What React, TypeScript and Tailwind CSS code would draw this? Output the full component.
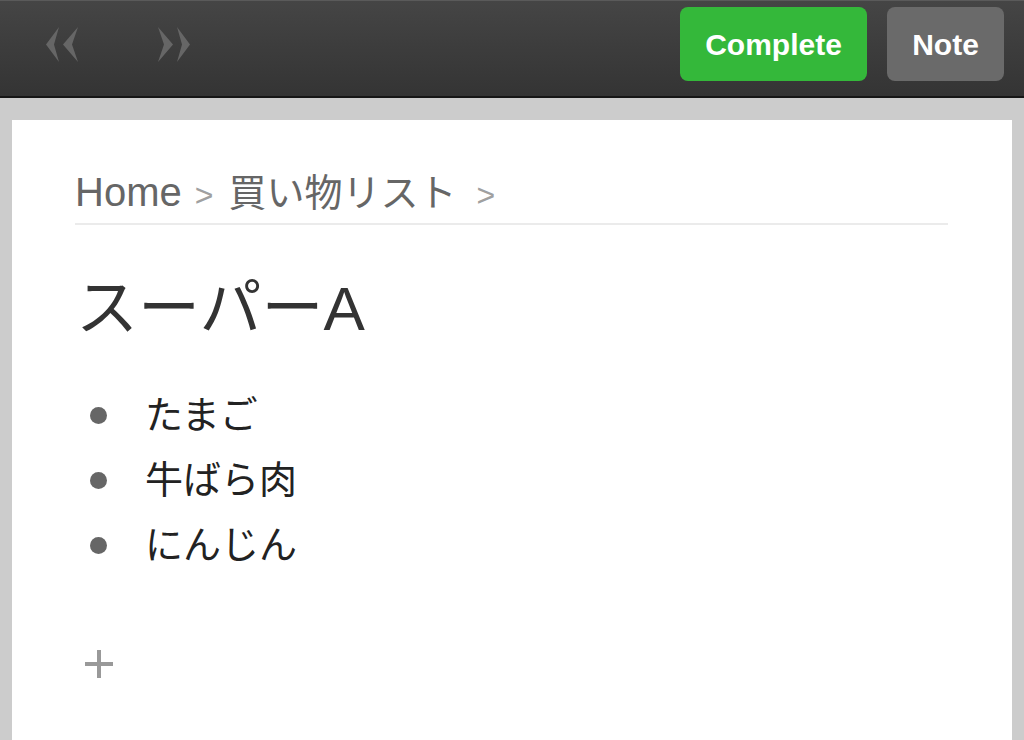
const items = ["たまご", "牛ばら肉", "にんじん"];

const font = { fontFamily: "'Liberation Sans', 'Noto Sans CJK JP', sans-serif" };

function Chevrons({ dir }: { dir: "left" | "right" }) {
  const d =
    dir === "left"
      ? "M13 0 L0 17.5 L13 35 L8 17.5 Z M32 0 L17 17.5 L32 35 L26 17.5 Z"
      : "M1 0 L16 17.5 L1 35 L7 17.5 Z M20 0 L33 17.5 L20 35 L25 17.5 Z";
  return (
    <svg width="34" height="35" viewBox="0 0 34 35">
      <path d={d} fill="#666" />
    </svg>
  );
}

export default function App() {
  return (
    <div className="w-[1024px] h-[740px] overflow-hidden bg-[#cccccc] flex flex-col" style={font}>
      {/* Top toolbar */}
      <div className="h-[98px] shrink-0 bg-gradient-to-b from-[#454545] to-[#343434] border-t border-[#5a5a5a] border-b-2 border-b-[#161616] flex items-start">
        <div className="flex items-center gap-[77px] pl-[46px] pt-[26px]">
          <Chevrons dir="left" />
          <Chevrons dir="right" />
        </div>
        <div className="ml-auto flex items-start gap-[20px] pr-[20px] pt-[6px]">
          <button className="w-[187px] h-[74px] rounded-[8px] bg-[#34b83a] text-white text-[30px] font-bold">
            Complete
          </button>
          <button className="w-[117px] h-[74px] rounded-[8px] bg-[#6a6a6a] text-white text-[30px] font-bold">
            Note
          </button>
        </div>
      </div>

      {/* Page */}
      <div className="flex-1 mt-[22px] mx-[12px] bg-white px-[63px] pt-[44px]">
        <div className="flex items-baseline text-[40px] leading-[56px] text-[#666] border-b-2 border-[#ebebeb] mr-[1px]">
          <span>Home</span>
          <span className="text-[#a0a0a0] text-[32px] ml-[13px] mr-[15px]">&gt;</span>
          <span className="text-[38px]">買い物リスト</span>
          <span className="text-[#a0a0a0] text-[32px] ml-[20px]">&gt;</span>
        </div>

        <h1 className="text-[62px] leading-[80px] text-[#333] mt-[44px] ml-[1px]">スーパーA</h1>

        <ul className="mt-[34px]">
          {items.map((item) => (
            <li key={item} className="flex items-center h-[65px]">
              <span className="w-[17px] h-[17px] rounded-full bg-[#666] ml-[15px] mr-[38px]" />
              <span className="text-[38px] text-[#222]">{item}</span>
            </li>
          ))}
        </ul>

        <div className="mt-[70px] ml-[8px]">
          <svg width="32" height="32" viewBox="0 0 32 32">
            <path d="M16 2 V30 M2 16 H30" stroke="#999" strokeWidth="4" />
          </svg>
        </div>
      </div>
    </div>
  );
}
